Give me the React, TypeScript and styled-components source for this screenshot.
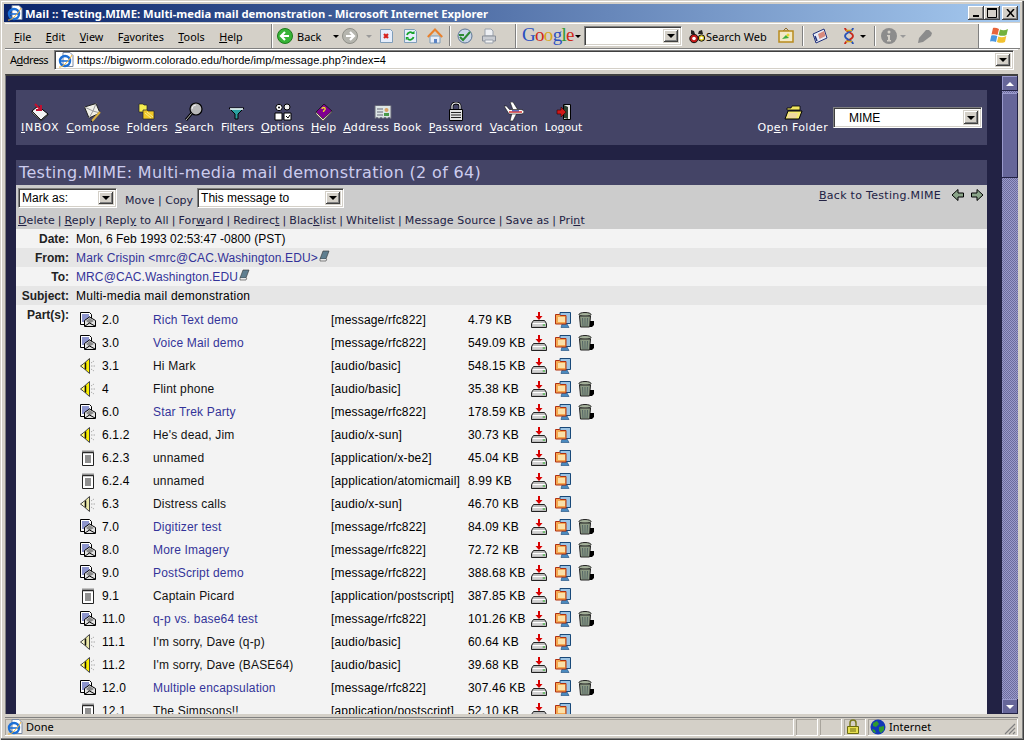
import React from 'react';
import styled, {createGlobalStyle} from 'styled-components';

const GlobalStyle = createGlobalStyle`
  html, body {
    margin: 0;
    padding: 0;
    overflow: hidden;
    background: #d4d0c8;
  }
  * {
    box-sizing: border-box;
  }
`;

const CHROME_FONT = `"Noto Sans", "DejaVu Sans", sans-serif`;
const VERDANA = `"DejaVu Sans", Verdana, sans-serif`;
const ARIAL = `"Liberation Sans", Arial, sans-serif`;

const Window = styled.div`
  width: 1024px;
  height: 740px;
  display: flex;
  flex-direction: column;
  overflow: hidden;
  background: #d4d0c8;
  border-top: 1px solid #d4d0c8;
  border-left: 1px solid #d4d0c8;
  box-shadow: inset -1px -1px 0 #404040, inset -2px -2px 0 #808080, inset 1px 1px 0 #fff;
  padding: 3px 6px 4px 4px;
  font-family: ${CHROME_FONT};
`;

const TitleBar = styled.div`
  height: 18px;
  flex: none;
  display: flex;
  align-items: center;
  padding: 0 2px 0 3px;
  background: linear-gradient(90deg, #0a246a 0%, #a6caf0 100%);
  color: #fff;
  font-size: 11.25px;
  font-weight: 700;
  margin: 0 -2px 0 -1px;
`;

const TitleText = styled.span`
  margin-left: 2px;
  flex: 1;
  white-space: nowrap;
`;

const WinButton = styled.div`
  width: 16px;
  height: 14px;
  margin-left: ${p => p.$gap || 0}px;
  background: #d4d0c8;
  box-shadow: inset -1px -1px 0 #404040, inset 1px 1px 0 #fff, inset -2px -2px 0 #808080;
  display: flex;
  align-items: center;
  justify-content: center;
`;

const ToolRow = styled.div`
  height: 26px;
  flex: none;
  display: flex;
  align-items: center;
  font-size: 11px;
  color: #000;
  border-top: 1px solid #fff;
  border-bottom: 1px solid #808080;
  margin: 1px -2px 0 0;
`;

const MenuBand = styled.div`
  width: 267px;
  display: flex;
  align-items: center;
  height: 100%;
  padding-left: 9px;
  gap: 14.5px;
  flex: none;
  border-right: 1px solid #808080;
  box-shadow: 1px 0 0 #fff;
`;

const MenuItem = styled.span`
  white-space: nowrap;
  font-size: 10.8px;
`;

const Band = styled.div`
  display: flex;
  align-items: center;
  height: 100%;
  width: ${p => p.$w}px;
  flex: none;
  padding-left: ${p => p.$pad || 0}px;
  border-right: 1px solid #808080;
  box-shadow: 1px 0 0 #fff;
`;

const BackLabel = styled.span`
  margin-left: 4px;
  width: 32px;
  font-size: 11px;
`;

const Slot = styled.div`
  width: ${p => p.$w}px;
  flex: none;
  display: flex;
  align-items: center;
  justify-content: ${p => p.$center ? 'center' : 'flex-start'};
`;

const Caret = styled.span`
  width: 0;
  height: 0;
  flex: none;
  border-left: 3px solid transparent;
  border-right: 3px solid transparent;
  border-top: 3px solid ${p => p.$muted ? '#9a9a9a' : '#000'};
`;

const ToolDivider = styled.span`
  width: 2px;
  height: 20px;
  flex: none;
  border-left: 1px solid #808080;
  border-right: 1px solid #fff;
  margin: 0 ${p => p.$m || 8}px;
`;

const GoogleLogo = styled.span`
  font-family: "Liberation Serif", serif;
  font-size: 19px;
  letter-spacing: -0.7px;
  width: 50px;
  flex: none;
  line-height: 20px;
  margin-top: -2px;
`;

const Letter = styled.span`
  color: ${p => p.$c};
`;

const Combo = styled.div`
  width: ${p => p.$w}px;
  height: ${p => p.$h || 20}px;
  flex: none;
  background: #fff;
  border: 1px solid #808080;
  border-bottom-color: #fff;
  border-right-color: #fff;
  box-shadow: inset 1px 1px 0 #404040, inset -1px -1px 0 #d4d0c8;
  display: flex;
  align-items: center;
  justify-content: space-between;
  padding: 2px 2px 2px 3px;
  color: #000;
  font-family: ${ARIAL};
  font-size: 12px;
`;

const ComboButton = styled.div`
  width: 16px;
  height: 100%;
  flex: none;
  background: #d4d0c8;
  box-shadow: inset -1px -1px 0 #404040, inset 1px 1px 0 #fff, inset -2px -2px 0 #808080;
  display: flex;
  align-items: center;
  justify-content: center;
  border: 1px solid #d4d0c8;
`;

const ComboCaret = styled.span`
  width: 0;
  height: 0;
  border-left: 4px solid transparent;
  border-right: 4px solid transparent;
  border-top: 4px solid #000;
`;

const SearchWeb = styled.span`
  font-size: 11px;
  width: 72px;
  flex: none;
  white-space: nowrap;
  margin-left: 1px;
`;

const FlagBox = styled.div`
  flex: 1;
  height: 100%;
  margin-left: 45px;
  background: #fff;
  display: flex;
  align-items: center;
  justify-content: center;
  border-left: 1px solid #808080;
`;

const AddressRow = styled.div`
  height: 23px;
  flex: none;
  display: flex;
  align-items: center;
  padding-left: 5px;
  border-top: 1px solid #fff;
  font-size: 11px;
`;

const AddressLabel = styled.span`
  width: 44px;
  flex: none;
  font-size: 11px;
  letter-spacing: -0.5px;
  margin-bottom: 3px;
`;

const AddressBox = styled.div`
  flex: 1;
  height: 20px;
  margin-right: 4px;
  margin-top: -2px;
  background: #fff;
  border: 1px solid #808080;
  border-bottom-color: #fff;
  border-right-color: #fff;
  box-shadow: inset 1px 1px 0 #404040, inset -1px -1px 0 #d4d0c8;
  display: flex;
  align-items: center;
  padding: 2px 2px 2px 3px;
`;

const AddressText = styled.span`
  flex: 1;
  margin-left: 3px;
  font-family: ${ARIAL};
  font-size: 11px;
  letter-spacing: 0.03px;
  white-space: nowrap;
`;

const ContentFrame = styled.div`
  flex: 1;
  min-height: 0;
  display: flex;
  margin-top: 2px;
  border-top: 2px solid #404040;
  border-left: 1px solid #808080;
  overflow: hidden;
`;

const Page = styled.div`
  flex: 1;
  min-width: 0;
  background: #222244;
  padding: 14px 15px 0 10px;
  overflow: hidden;
  display: flex;
  flex-direction: column;
  gap: 15px;
`;

const NavPanel = styled.div`
  height: 55px;
  flex: none;
  background: #444466;
  display: flex;
  align-items: flex-start;
  padding: 12px 0 0 5px;
  gap: 7px;
  color: #fff;
`;

const NavItem = styled.div`
  display: flex;
  flex-direction: column;
  align-items: center;
  font-family: ${VERDANA};
  font-size: 11px;
  line-height: 14px;
  letter-spacing: ${p => p.$ls ?? 0.33}px;
  white-space: nowrap;
`;

const NavIcon = styled.div`
  height: 19px;
  display: flex;
  align-items: center;
  justify-content: center;
`;

const NavSpacer = styled.div`
  flex: 1;
`;

const FolderCombo = styled.div`
  margin: 5px 5px 0 -2px;
`;

const MimeLabel = styled.span`
  margin-left: 12px;
  font-size: 12px;
`;

const Message = styled.div`
  flex: 1;
  min-height: 0;
  display: flex;
  flex-direction: column;
`;

const SubjectBar = styled.div`
  height: 25px;
  flex: none;
  background: #444466;
  color: #ccccee;
  font-family: ${VERDANA};
  font-size: 16px;
  letter-spacing: 0.33px;
  line-height: 25px;
  padding-left: 3px;
  white-space: nowrap;
`;

const ActionPanel = styled.div`
  height: 44px;
  flex: none;
  background: #cccccc;
  padding: 2px 2px 0 2px;
  color: #222244;
  font-family: ${VERDANA};
  font-size: 11px;
`;

const ActionTop = styled.div`
  height: 22px;
  display: flex;
  align-items: center;
`;

const MoveLinks = styled.span`
  margin: 5px 4px 0 8px;
  white-space: nowrap;
`;

const BackLink = styled.span`
  margin-left: auto;
  margin-bottom: 6px;
  white-space: nowrap;
  display: flex;
  align-items: center;
  gap: 10px;
  letter-spacing: 0.3px;
`;

const ArrowPair = styled.span`
  display: flex;
  gap: 5px;
  margin-right: 1px;
`;

const ActionLinks = styled.div`
  margin-top: 4px;
  white-space: nowrap;
  line-height: 15px;
  letter-spacing: 0.1px;
`;

const Sep = styled.span`
  margin: 0 3px;
  color: #222244;
`;

const Details = styled.div`
  flex: 1;
  min-height: 0;
  background: #f3f3f3;
  font-family: ${ARIAL};
  font-size: 12px;
  color: #000;
  overflow: hidden;
`;

const HeaderRow = styled.div`
  height: 19px;
  display: flex;
  align-items: center;
  background: ${p => p.$alt ? '#e6e6e6' : 'transparent'};
`;

const HeaderText = styled.span`
  letter-spacing: ${p => p.$ls || 0}px;
  color: ${p => p.$link ? '#333399' : '#000'};
`;

const HeaderLabel = styled.b`
  width: 53px;
  flex: none;
  text-align: right;
  margin-right: 7px;
  color: #222;
`;

const BookIcon = styled.span`
  display: inline-flex;
  margin-top: -3px;
`;

const PartsBlock = styled.div`
  display: flex;
  padding-top: 3px;
`;

const PartsTable = styled.div`
  display: flex;
  flex-direction: column;
  padding-left: 4px;
`;

const PartRow = styled.div`
  height: 23px;
  display: grid;
  grid-template-columns: 22px 51px 178px 137px 63px 24px 23px 24px;
  align-items: center;
  letter-spacing: 0.18px;
  white-space: nowrap;
`;

const PartName = styled.span`
  color: ${p => p.$link ? '#333399' : '#111'};
`;

const StatusBar = styled.div`
  height: 19px;
  flex: none;
  margin-top: 3px;
  display: flex;
  gap: 2px;
  font-size: 11px;
  border-top: 1px solid #808080;
  padding-top: 1px;
`;

const StatusCell = styled.div`
  height: 100%;
  width: ${p => p.$w ? `${p.$w}px` : 'auto'};
  flex: ${p => p.$w ? 'none' : 1};
  display: flex;
  align-items: center;
  gap: 3px;
  padding-left: 2px;
  padding-bottom: 1px;
  border-right: 1px solid #fff;
  border-bottom: 1px solid #fff;
  box-shadow: inset 1px 1px 0 #a8a49c;
  position: relative;
`;

const Grip = styled.svg`
  position: absolute;
  right: 1px;
  bottom: 0;
`;

const ScrollBar = styled.div`
  width: 16px;
  flex: none;
  background-color: #666699;
  background-image: repeating-conic-gradient(#9a9acc 0 25%, #6c6c9c 0 50%);
  background-size: 2px 2px;
  display: flex;
  flex-direction: column;
`;

const ScrollButton = styled.div`
  height: 15px;
  flex: none;
  background: #666699;
  box-shadow: inset -1px -1px 0 #222244, inset 1px 1px 0 #9999cc;
  display: flex;
  align-items: center;
  justify-content: center;
`;

const ScrollThumb = styled.div`
  height: 85px;
  flex: none;
  margin-top: 2px;
  background: #666699;
  box-shadow: inset -1px -1px 0 #222244, inset 1px 1px 0 #9999cc;
`;

const ScrollTrack = styled.div`
  flex: 1;
`;

const ScrollArrow = styled.span`
  width: 0;
  height: 0;
  border-left: 4px solid transparent;
  border-right: 4px solid transparent;
  ${p => p.$up ? 'border-bottom: 4px solid #fff;' : 'border-top: 4px solid #fff;'}
`;

const PixelSvg = styled.svg`
  display: block;
  flex: none;
`;

const Ico = ({s = 16, w, h, children}: {s?: number; w?: number; h?: number; children: React.ReactNode}) => (
    <PixelSvg width={w || s} height={h || s} viewBox={`0 0 ${w || s} ${h || s}`}>{children}</PixelSvg>
);

const IeIcon = () => (
    <Ico>
        <path d="M5 .5h7l3 3v11H5z" fill="#fff" stroke="#7b8aa5" />
        <circle cx="7" cy="9" r="5" fill="none" stroke="#1c6fd6" strokeWidth="2.4" />
        <path d="M2 9h10" stroke="#1c6fd6" strokeWidth="1.6" />
        <path d="M1 15c2 1 9-4 13-12" stroke="#f2b233" fill="none" />
    </Ico>
);

const RoundIcon = ({color, ring, dir}: {color: string; ring: string; dir: 'l' | 'r'}) => (
    <Ico>
        <circle cx="8" cy="8" r="7.5" fill={color} stroke={ring} />
        <path d={dir === 'l' ? 'M12 8H5M8 4L4 8l4 4' : 'M4 8h7M8 4l4 4-4 4'} stroke="#fff" strokeWidth="2.2" fill="none" />
    </Ico>
);

const StopIcon = () => (
    <Ico>
        <path d="M1.5 1.5h10l2 2v11h-12z" fill="#e6eefc" stroke="#7f9db9" />
        <path d="M5 6l4 4M9 6l-4 4" stroke="#d8221c" strokeWidth="2.2" />
    </Ico>
);

const RefreshIcon = () => (
    <Ico>
        <path d="M1.5 1.5h10l2 2v11h-12z" fill="#e6eefc" stroke="#7f9db9" />
        <path d="M4 7a3.4 3.4 0 0 1 6-1.5M10.5 9A3.4 3.4 0 0 1 4.5 10.5" stroke="#17a32a" strokeWidth="1.8" fill="none" />
        <path d="M8 6h3.5V2.8zM6 9H2.8v3.3z" fill="#17a32a" />
    </Ico>
);

const HomeIcon = () => (
    <Ico>
        <path d="M3 8v7h10V8z" fill="#e9edf7" stroke="#7f9db9" />
        <path d="M.8 9L8 1.5 15.2 9" stroke="#e8812d" strokeWidth="2" fill="none" />
        <path d="M7 11h3v4H7z" fill="#5a83c4" />
    </Ico>
);

const MediaIcon = () => (
    <Ico>
        <circle cx="8" cy="8" r="7" fill="#c9d6e8" stroke="#5e7695" />
        <path d="M3 9l3 3 7-8" stroke="#2b8a33" strokeWidth="2" fill="none" />
        <path d="M2 7h5" stroke="#2b8a33" strokeWidth="2" />
    </Ico>
);

const PrintIcon = () => (
    <Ico>
        <path d="M4 1h6l2 2v5H4z" fill="#eef0f4" stroke="#9aa2ad" />
        <path d="M1.5 8h13v5h-13z" fill="#c9ccd2" stroke="#8a8f98" />
        <path d="M4 12h8v3H4z" fill="#f4f4f4" stroke="#9aa2ad" />
    </Ico>
);

const BinocularsIcon = () => (
    <Ico>
        <path d="M2 2l3 1 1 3H2zM13 2l-3 1-1 3h5z" fill="#222" />
        <circle cx="5" cy="10.5" r="4.2" fill="#c21818" stroke="#111" />
        <circle cx="5" cy="10.5" r="1.8" fill="#fff" />
        <circle cx="12.5" cy="10" r="3.2" fill="#e6d230" stroke="#111" />
        <circle cx="12.5" cy="10" r="1.3" fill="#fff" />
    </Ico>
);

const FrameIcon = () => (
    <Ico>
        <path d="M8 0l3 3H5z" fill="none" stroke="#8b6a2c" />
        <path d="M1 3h14v11H1z" fill="#f3e9c6" stroke="#b88a1e" strokeWidth="1.5" />
        <path d="M4 11l4-4 3 3z" fill="#3fae3a" />
        <circle cx="10" cy="7" r="1.5" fill="#e5d82e" />
    </Ico>
);

const NewsIcon = () => (
    <Ico>
        <path d="M1 6l11-5 3 9-11 5z" fill="#e9ecf6" stroke="#20307a" />
        <path d="M6 6l6-3 1.5 5-6 3z" fill="#d88a7c" />
        <path d="M3 8l2 5" stroke="#20307a" strokeWidth="1.5" />
    </Ico>
);

const DnaIcon = () => (
    <Ico>
        <path d="M4 0c0 4 8 4 8 8s-8 4-8 8" stroke="#c8281c" strokeWidth="1.8" fill="none" />
        <path d="M12 0c0 4-8 4-8 8s8 4 8 8" stroke="#2a54b8" strokeWidth="1.8" fill="none" />
        <path d="M5 2.5h6M5 13.5h6" stroke="#d8a718" strokeWidth="1.5" />
    </Ico>
);

const InfoIcon = () => (
    <Ico>
        <circle cx="8" cy="8" r="8" fill="#8c8c8c" />
        <circle cx="8" cy="4" r="1.5" fill="#d4d0c8" />
        <path d="M6 7h3v5h1v1.5H6V12h1V8.5H6z" fill="#d4d0c8" />
    </Ico>
);

const PenIcon = () => (
    <Ico>
        <path d="M1 15l1-5 7-8h3l3 3-1 3-8 6z" fill="#8c8c8c" />
    </Ico>
);

const FlagIcon = () => (
    <Ico w={20} h={18}>
        <path d="M3 1c2-.5 4 0 6 1L7.5 8C5.5 7 3.500 7 1.500 7.500z" fill="#e8643a" />
        <path d="M10 2.5c2.500 1 5 1 8-.5l-1.500 6c-3 1.300-5.500 1-8 0z" fill="#73b13c" />
        <path d="M1.300 8.500c2-.5 4-.5 6 .5L6 15c-2-1-4-1-6-.5z" fill="#4a96e0" />
        <path d="M8.300 9.500c2.500 1 5 1 8-.5L15 15c-3 1.300-5.500 1-8 0z" fill="#f2c230" />
    </Ico>
);

const InboxIcon = () => (
    <Ico s={20}>
        <path d="M2 9l6-5 10 8-7 6z" fill="#f4f4f4" stroke="#000" />
        <path d="M2 9v2l9 8 7-6v-1l-7 6z" fill="#999" stroke="#000" strokeWidth="0.6" />
        <path d="M5 2l5 5M11 3v5H6" stroke="#c01030" strokeWidth="2" fill="none" />
    </Ico>
);

const ComposeIcon = () => (
    <Ico s={20}>
        <path d="M1.5 5L13 1.5 17 11 6 16z" fill="#f0f0e8" stroke="#222" />
        <path d="M1.5 5L10 9l3-7.500M6 16l4-7 7 2" stroke="#999" fill="none" />
        <path d="M9 19l8-9" stroke="#d8b040" strokeWidth="2" />
        <path d="M8 19l1 .5" stroke="#000" />
    </Ico>
);

const FoldersIcon = () => (
    <Ico s={20}>
        <path d="M2 2h4l1 1h3v7H2z" fill="#f6ee50" stroke="#222" strokeWidth="0.7" />
        <path d="M6 8h4l1 1h6v8H6z" fill="#f0c828" stroke="#222" strokeWidth="0.7" />
        <path d="M8 11l6 5M10 10l6 5" stroke="#f8ec90" />
    </Ico>
);

const SearchIcon = () => (
    <Ico s={20}>
        <circle cx="12" cy="7" r="6" fill="#b8b8b8" stroke="#000" strokeWidth="1.2" />
        <path d="M8 7a4 4 0 0 1 4-4" stroke="#eee" fill="none" />
        <path d="M7.5 11.500L2 18" stroke="#000" strokeWidth="2.8" />
        <path d="M7.5 11.500L2 18" stroke="#eee" strokeWidth="0.8" />
    </Ico>
);

const FilterIcon = () => (
    <Ico s={20}>
        <path d="M2 6h15l-6 6v5H8v-5z" fill="#2aa0a0" stroke="#000" />
        <path d="M3 7h13" stroke="#fff" strokeWidth="1.5" />
    </Ico>
);

const OptionsIcon = () => (
    <Ico s={20}>
        <circle cx="6" cy="5.500" r="3.2" fill="#fff" stroke="#000" />
        <circle cx="6" cy="5.500" r="1" fill="#000" />
        <circle cx="14" cy="5" r="3" fill="#eee" stroke="#000" />
        <path d="M2 11h7v7H2z" fill="#fff" stroke="#000" />
        <path d="M11 11h7v7h-7z" fill="#fff" stroke="#000" />
        <path d="M13 14l2 2 2-3" stroke="#000" fill="none" />
    </Ico>
);

const HelpIcon = () => (
    <Ico s={20}>
        <path d="M2 10l8-8 8 7-9 8z" fill="#800090" stroke="#111" strokeWidth="0.8" />
        <path d="M2 10v2l7 7 9-9V9l-9 8z" fill="#f0e0c8" stroke="#333" strokeWidth="0.6" />
        <path d="M8 7c0-2 4-2 3 .5-.5 1-1.500 1-1.500 2.500" stroke="#f0e020" strokeWidth="1.4" fill="none" />
    </Ico>
);

const AddressBookIcon = () => (
    <Ico s={20}>
        <path d="M2 3.500h16v13l-2-1-2 1-2-1-2 1-2-1-2 1-2-1-2 1z" fill="#dde6e6" stroke="#667" />
        <path d="M4 7h6M4 10h6M4 13h6" stroke="#667" strokeWidth="1.2" />
        <circle cx="13.500" cy="8" r="2" fill="#d8a060" />
        <path d="M11 14v-3h5v3z" fill="#4a9a4a" />
    </Ico>
);

const LockIcon = () => (
    <Ico s={20}>
        <path d="M6 8V4a4 3 0 0 1 8 0v4" stroke="#000" strokeWidth="2.8" fill="none" />
        <path d="M6 8V4a4 3 0 0 1 8 0v4" stroke="#fff" strokeWidth="1.2" fill="none" />
        <path d="M3.500 7.500h13v11h-13z" fill="#e4e4e4" stroke="#000" />
        <path d="M5 10.500h10M5 13h10M5 15.500h10" stroke="#222" strokeWidth="1.2" />
    </Ico>
);

const PlaneIcon = () => (
    <Ico s={20}>
        <path d="M6 0h3l5 8H9zM6 19h3l4-8H8z" fill="#fff" stroke="#111" strokeWidth="0.6" />
        <path d="M0 4h2.500l3 3.500H16c2.500 0 4 1 4 2.500s-2 2-4 2H5z" fill="#fff" stroke="#111" strokeWidth="0.6" />
        <path d="M5 10h13" stroke="#d02020" strokeWidth="1.4" />
        <path d="M8 8.800h7" stroke="#2030a0" />
    </Ico>
);

const LogoutIcon = () => (
    <Ico s={20}>
        <path d="M9.500 2.500h7v15h-7z" fill="#e8e8e8" stroke="#000" />
        <path d="M10 3l4 2v12l-4-1z" fill="#2c4030" />
        <path d="M3 8h4V5l5 5-5 5v-3H3z" fill="#d01818" stroke="#300" strokeWidth="0.6" />
    </Ico>
);

const OpenFolderIcon = () => (
    <Ico s={20}>
        <path d="M4 6h4l1-2h8v4H4z" fill="#f2e860" stroke="#000" strokeWidth="0.8" />
        <path d="M2 17l3-8h14l-3 8z" fill="#f6ec70" stroke="#000" />
        <path d="M6 11l-2 5h9l2-5z" fill="#f0d8a0" />
    </Ico>
);

const MessageIcon = () => (
    <Ico>
        <path d="M.5 .5h9l2 2v6l-6 4H.5z" fill="#fff" stroke="#000" />
        <path d="M2 3h7M2 5h8M2 7h6M2 9h4" stroke="#1a2a9a" />
        <path d="M4.500 14.500V8.500L9.500 5l6 3.500v6z" fill="#e4e4e4" stroke="#000" />
        <path d="M6 9l3.500-3L14 9l-4.500 2.500z" fill="#8c8c8c" />
        <path d="M5 14l4.500-3 5.500 3" stroke="#000" fill="none" />
    </Ico>
);

const SpeakerIcon = ({pale}: {pale?: boolean}) => (
    <Ico>
        <path d="M.5 8l4-3 5-4.500v15l-5-4.500z" fill={pale ? '#ece9a8' : '#fbf000'} stroke="#444" />
        <path d="M5.500 4.500v7" stroke="#111" strokeWidth="1.500" />
        <path d="M2 8h1M3 7h1M3 9h1" stroke="#fff" />
        <path d="M11 5l3-2M11 8h4M11 11l3 2" stroke="#a8a8a8" strokeDasharray="1.500 1" />
    </Ico>
);

const NoteIcon = () => (
    <Ico>
        <path d="M2.500 2.500h11v13h-11z" fill="#fff" stroke="#222" />
        <path d="M3 0.500v3M5 0.500v3M7 0.500v3M9 0.500v3M11 0.500v3M13 0.500v3" stroke="#333" />
        <path d="M5 6h6M5 8h6M5 10h6M5 12h6" stroke="#222" />
    </Ico>
);

const DownloadIcon = () => (
    <Ico>
        <path d="M.5 11.500l2-3h11l2 3v4H.5z" fill="#bcbcbc" stroke="#222" />
        <path d="M2 11.500h12" stroke="#fff" />
        <path d="M2 13h9" stroke="#e8e8e8" />
        <path d="M12 13h2" stroke="#27c027" />
        <path d="M8 0v5" stroke="#d80000" strokeWidth="2" />
        <path d="M4.500 4h7L8 8z" fill="#d80000" />
    </Ico>
);

const ViewIcon = () => (
    <Ico>
        <path d="M5 .5h10.500v11H5z" fill="#9cc4e4" stroke="#184878" />
        <path d="M7 12h5l2 3.500H6z" fill="#4a8ac0" stroke="#184878" strokeWidth="0.6" />
        <path d="M.5 2.500h4l1 1H11v8.500H.5z" fill="#f4a850" stroke="#b03010" />
        <path d="M3 5h7v5H3z" fill="#fbe0a8" />
    </Ico>
);

const TrashIcon = () => (
    <Ico>
        <ellipse cx="7" cy="2.500" rx="6" ry="2" fill="#a4b09a" stroke="#222" />
        <path d="M1.500 4h11l-1 11h-9z" fill="#8c9a84" stroke="#222" />
        <path d="M4.500 6l.5 8M7 6v8M9.500 6L9 14" stroke="#566" />
        <path d="M12 9h4v4l-2 2h-2z" fill="#000" />
    </Ico>
);

const SmallBookIcon = () => (
    <Ico s={12}>
        <path d="M2 9l3-8h6L8 9z" fill="#607f90" stroke="#333" strokeWidth="0.6" />
        <path d="M2 9v2h6l.8-2" fill="#e8e8e8" stroke="#555" strokeWidth="0.7" />
    </Ico>
);

const ArrowIcon = ({dir}: {dir: 'l' | 'r'}) => (
    <Ico w={14} h={14}>
        <path d={dir === 'l' ? 'M1 7l6-5.500V5h5.500v4H7v3.500z' : 'M13 7L7 1.500V5H1.500v4H7v3.500z'} fill="#8aa488" stroke="#000" />
    </Ico>
);

const LockStatusIcon = () => (
    <Ico w={14} h={16}>
        <path d="M4 7V4a3 3 0 0 1 6 0v3" stroke="#7a7a20" strokeWidth="1.5" fill="none" />
        <path d="M1.500 7.500h11v7h-11z" fill="#e8e050" stroke="#6a6a10" />
        <path d="M4 10h6M4 12h6" stroke="#6a6a10" />
    </Ico>
);

const GlobeIcon = () => (
    <Ico>
        <circle cx="8" cy="8" r="7.5" fill="#1238b8" />
        <path d="M3 4l4-2 2 3-3 3-3-1zM9 8l5-1 0 4-3 3-2-2zM2 10l3 1 1 3-3-1z" fill="#2f9a30" />
    </Ico>
);

const CloseGlyph = () => (
    <Ico w={9} h={8}>
        <path d="M1 0l7 8M8 0L1 8" stroke="#000" strokeWidth="1.5" />
    </Ico>
);

const navItems = [
    {pre: '', key: 'I', post: 'NBOX', ls: 0.8, icon: <InboxIcon />},
    {pre: '', key: 'C', post: 'ompose', ls: 0.3, icon: <ComposeIcon />},
    {pre: '', key: 'F', post: 'olders', ls: 0.2, icon: <FoldersIcon />},
    {pre: '', key: 'S', post: 'earch', ls: 0.2, icon: <SearchIcon />},
    {pre: 'Fi', key: 'l', post: 'ters', ls: 0, icon: <FilterIcon />},
    {pre: '', key: 'O', post: 'ptions', ls: 0.1, icon: <OptionsIcon />},
    {pre: '', key: 'H', post: 'elp', ls: 0, icon: <HelpIcon />},
    {pre: '', key: 'A', post: 'ddress Book', ls: 0.33, icon: <AddressBookIcon />},
    {pre: '', key: 'P', post: 'assword', ls: 0.3, icon: <LockIcon />},
    {pre: '', key: 'V', post: 'acation', ls: 0.1, icon: <PlaneIcon />},
    {pre: 'Lo', key: 'g', post: 'out', ls: 0, icon: <LogoutIcon />},
];

const actions = [
    ['', 'D', 'elete'],
    ['', 'R', 'eply'],
    ['Repl', 'y', ' to All'],
    ['For', 'w', 'ard'],
    ['Redirec', 't', ''],
    ['Blac', 'k', 'list'],
    ['', '', 'Whitelist'],
    ['', '', 'Message Source'],
    ['', '', 'Save as'],
    ['Pri', 'n', 't'],
];

type Kind = 'msg' | 'audio' | 'pale' | 'note';

const parts: {kind: Kind; num: string; name: string; link?: boolean; type: string; size: string; trash?: boolean}[] = [
    {kind: 'msg', num: '2.0', name: 'Rich Text demo', link: true, type: '[message/rfc822]', size: '4.79 KB', trash: true},
    {kind: 'msg', num: '3.0', name: 'Voice Mail demo', link: true, type: '[message/rfc822]', size: '549.09 KB', trash: true},
    {kind: 'audio', num: '3.1', name: 'Hi Mark', type: '[audio/basic]', size: '548.15 KB'},
    {kind: 'audio', num: '4', name: 'Flint phone', type: '[audio/basic]', size: '35.38 KB', trash: true},
    {kind: 'msg', num: '6.0', name: 'Star Trek Party', link: true, type: '[message/rfc822]', size: '178.59 KB', trash: true},
    {kind: 'audio', num: '6.1.2', name: "He's dead, Jim", type: '[audio/x-sun]', size: '30.73 KB'},
    {kind: 'note', num: '6.2.3', name: 'unnamed', type: '[application/x-be2]', size: '45.04 KB'},
    {kind: 'note', num: '6.2.4', name: 'unnamed', type: '[application/atomicmail]', size: '8.99 KB'},
    {kind: 'pale', num: '6.3', name: 'Distress calls', type: '[audio/x-sun]', size: '46.70 KB'},
    {kind: 'msg', num: '7.0', name: 'Digitizer test', link: true, type: '[message/rfc822]', size: '84.09 KB', trash: true},
    {kind: 'msg', num: '8.0', name: 'More Imagery', link: true, type: '[message/rfc822]', size: '72.72 KB', trash: true},
    {kind: 'msg', num: '9.0', name: 'PostScript demo', link: true, type: '[message/rfc822]', size: '388.68 KB', trash: true},
    {kind: 'note', num: '9.1', name: 'Captain Picard', type: '[application/postscript]', size: '387.85 KB'},
    {kind: 'msg', num: '11.0', name: 'q-p vs. base64 test', link: true, type: '[message/rfc822]', size: '101.26 KB', trash: true},
    {kind: 'pale', num: '11.1', name: "I'm sorry, Dave (q-p)", type: '[audio/basic]', size: '60.64 KB'},
    {kind: 'audio', num: '11.2', name: "I'm sorry, Dave (BASE64)", type: '[audio/basic]', size: '39.68 KB'},
    {kind: 'msg', num: '12.0', name: 'Multiple encapsulation', link: true, type: '[message/rfc822]', size: '307.46 KB', trash: true},
    {kind: 'note', num: '12.1', name: 'The Simpsons!!', type: '[application/postscript]', size: '52.10 KB'},
];

const kindIcon = (kind: Kind) => {
    if (kind === 'msg') return <MessageIcon />;
    if (kind === 'note') return <NoteIcon />;
    return <SpeakerIcon pale={kind === 'pale'} />;
};

const GoogleBand = () => (
    <>
        <Slot $w={6} />
        <GoogleLogo>
            <Letter $c="#2a50c0">G</Letter>
            <Letter $c="#d02818">o</Letter>
            <Letter $c="#d8a818">o</Letter>
            <Letter $c="#2a50c0">g</Letter>
            <Letter $c="#2f9a30">l</Letter>
            <Letter $c="#d02818">e</Letter>
        </GoogleLogo>
        <Slot $w={12} $center><Caret /></Slot>
        <Combo $w={98}><span /><ComboButton><ComboCaret /></ComboButton></Combo>
        <Slot $w={7} />
        <BinocularsIcon />
        <SearchWeb>Search Web</SearchWeb>
        <FrameIcon />
        <ToolDivider $m={8} />
        <NewsIcon />
        <Slot $w={13} />
        <DnaIcon />
        <Slot $w={12} $center><Caret /></Slot>
        <ToolDivider $m={5} />
        <InfoIcon />
        <Slot $w={12} $center><Caret $muted /></Slot>
        <Slot $w={8} />
        <PenIcon />
    </>
);

const App = () => {
    return (
        <Window>
            <GlobalStyle />
            <TitleBar>
                <IeIcon />
                <TitleText>Mail :: Testing.MIME: Multi-media mail demonstration - Microsoft Internet Explorer</TitleText>
                <WinButton><Ico w={8} h={8}><path d="M1 6h6v2H1z" fill="#000" /></Ico></WinButton>
                <WinButton><Ico w={10} h={10}><path d="M.5 1.5h9v8h-9z" fill="none" stroke="#000" /><path d="M0 1h10" stroke="#000" strokeWidth="2" /></Ico></WinButton>
                <WinButton $gap={2}><CloseGlyph /></WinButton>
            </TitleBar>
            <ToolRow>
                <MenuBand>
                    <MenuItem><u>F</u>ile</MenuItem>
                    <MenuItem><u>E</u>dit</MenuItem>
                    <MenuItem><u>V</u>iew</MenuItem>
                    <MenuItem>F<u>a</u>vorites</MenuItem>
                    <MenuItem><u>T</u>ools</MenuItem>
                    <MenuItem><u>H</u>elp</MenuItem>
                </MenuBand>
                <Band $w={244} $pad={5}>
                    <RoundIcon color="#36b336" ring="#1d7a1d" dir="l" />
                    <BackLabel>Back</BackLabel>
                    <Slot $w={13} $center><Caret /></Slot>
                    <RoundIcon color="#b5b5ae" ring="#8f8f88" dir="r" />
                    <Slot $w={21} $center><Caret $muted /></Slot>
                    <StopIcon />
                    <Slot $w={8} />
                    <RefreshIcon />
                    <Slot $w={8} />
                    <HomeIcon />
                    <ToolDivider $m={6} />
                    <MediaIcon />
                    <Slot $w={8} />
                    <PrintIcon />
                </Band>
                <GoogleBand />
                <FlagBox><FlagIcon /></FlagBox>
            </ToolRow>
            <AddressRow>
                <AddressLabel>A<u>d</u>dress</AddressLabel>
                <AddressBox>
                    <IeIcon />
                    <AddressText>https://bigworm.colorado.edu/horde/imp/message.php?index=4</AddressText>
                    <ComboButton><ComboCaret /></ComboButton>
                </AddressBox>
            </AddressRow>
            <ContentFrame>
                <Page>
                    <NavPanel>
                        {navItems.map(n => (
                            <NavItem key={n.post} $ls={n.ls}>
                                <NavIcon>{n.icon}</NavIcon>
                                <span>{n.pre}<u>{n.key}</u>{n.post}</span>
                            </NavItem>
                        ))}
                        <NavSpacer />
                        <NavItem>
                            <NavIcon><OpenFolderIcon /></NavIcon>
                            <span>Op<u>e</u>n Folder</span>
                        </NavItem>
                        <FolderCombo>
                            <Combo $w={149} $h={21}>
                                <MimeLabel>MIME</MimeLabel>
                                <ComboButton><ComboCaret /></ComboButton>
                            </Combo>
                        </FolderCombo>
                    </NavPanel>
                    <Message>
                        <SubjectBar>Testing.MIME: Multi-media mail demonstration (2 of 64)</SubjectBar>
                        <ActionPanel>
                            <ActionTop>
                                <Combo $w={99}>
                                    <span>Mark as:</span>
                                    <ComboButton><ComboCaret /></ComboButton>
                                </Combo>
                                <MoveLinks>Move | Copy</MoveLinks>
                                <Combo $w={147}>
                                    <span>This message to</span>
                                    <ComboButton><ComboCaret /></ComboButton>
                                </Combo>
                                <BackLink>
                                    <span><u>B</u>ack to Testing.MIME</span>
                                    <ArrowPair>
                                        <ArrowIcon dir="l" />
                                        <ArrowIcon dir="r" />
                                    </ArrowPair>
                                </BackLink>
                            </ActionTop>
                            <ActionLinks>
                                {actions.map((a, i) => (
                                    <React.Fragment key={a.join('')}>
                                        {i > 0 && <Sep>|</Sep>}
                                        {a[0]}<u>{a[1]}</u>{a[2]}
                                    </React.Fragment>
                                ))}
                            </ActionLinks>
                        </ActionPanel>
                        <Details>
                            <HeaderRow>
                                <HeaderLabel>Date:</HeaderLabel>
                                <HeaderText>Mon, 6 Feb 1993 02:53:47 -0800 (PST)</HeaderText>
                            </HeaderRow>
                            <HeaderRow $alt>
                                <HeaderLabel>From:</HeaderLabel>
                                <HeaderText $link $ls={0.13}>Mark Crispin &lt;mrc@CAC.Washington.EDU&gt;</HeaderText>
                                <BookIcon><SmallBookIcon /></BookIcon>
                            </HeaderRow>
                            <HeaderRow>
                                <HeaderLabel>To:</HeaderLabel>
                                <HeaderText $link $ls={0.1}>MRC@CAC.Washington.EDU</HeaderText>
                                <BookIcon><SmallBookIcon /></BookIcon>
                            </HeaderRow>
                            <HeaderRow $alt>
                                <HeaderLabel>Subject:</HeaderLabel>
                                <HeaderText $ls={0.25}>Multi-media mail demonstration</HeaderText>
                            </HeaderRow>
                            <PartsBlock>
                                <HeaderLabel>Part(s):</HeaderLabel>
                                <PartsTable>
                                    {parts.map(p => (
                                        <PartRow key={p.num}>
                                            {kindIcon(p.kind)}
                                            <span>{p.num}</span>
                                            <PartName $link={p.link}>{p.name}</PartName>
                                            <span>{p.type}</span>
                                            <span>{p.size}</span>
                                            <DownloadIcon />
                                            <ViewIcon />
                                            {p.trash ? <TrashIcon /> : <span />}
                                        </PartRow>
                                    ))}
                                </PartsTable>
                            </PartsBlock>
                        </Details>
                    </Message>
                </Page>
                <ScrollBar>
                    <ScrollButton><ScrollArrow $up /></ScrollButton>
                    <ScrollThumb />
                    <ScrollTrack />
                    <ScrollButton><ScrollArrow /></ScrollButton>
                </ScrollBar>
            </ContentFrame>
            <StatusBar>
                <StatusCell>
                    <IeIcon />
                    <span>Done</span>
                </StatusCell>
                <StatusCell $w={22} />
                <StatusCell $w={22} />
                <StatusCell $w={22}><LockStatusIcon /></StatusCell>
                <StatusCell $w={150}>
                    <GlobeIcon />
                    <span>Internet</span>
                    <Grip width="13" height="13" viewBox="0 0 13 13">
                        <path d="M12 2L2 12M12 6l-6 6M12 10l-2 2" stroke="#808080" strokeWidth="1.2" />
                    </Grip>
                </StatusCell>
            </StatusBar>
        </Window>
    );
};

export default App;
